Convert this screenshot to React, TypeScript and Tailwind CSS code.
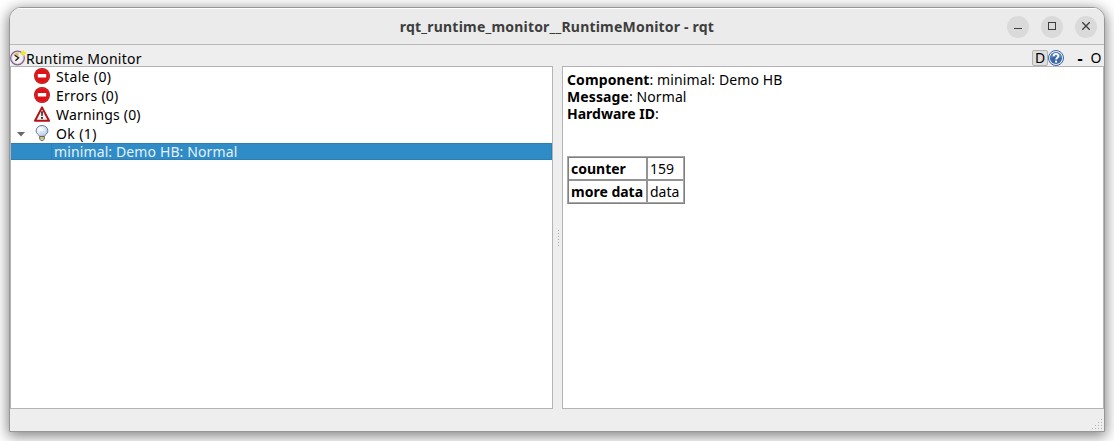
import React from "react";

function NoEntry() {
  return (
    <svg width="16" height="16" viewBox="0 0 16 16" className="block shrink-0">
      <circle cx="8" cy="8" r="8" fill="#b90d12" />
      <circle cx="8" cy="8" r="6.9" fill="#dc1216" stroke="#e84040" strokeWidth="0.5" />
      <rect x="3.8" y="6" width="8.4" height="3.6" rx="0.5" fill="#fff" />
    </svg>
  );
}

function Warning() {
  return (
    <svg width="16" height="16" viewBox="0 0 16 16" className="block shrink-0">
      <path d="M8 1.4 L15 14.8 H1 Z" fill="#f0f0f0" stroke="#b51216" strokeWidth="2" strokeLinejoin="round" />
      <path d="M7 5.2 H9 L8.7 10 H7.3 Z" fill="#333" />
      <rect x="7" y="11" width="2" height="1.8" fill="#333" />
    </svg>
  );
}

function Bulb() {
  return (
    <svg width="16" height="16" viewBox="0 0 16 16" className="block shrink-0">
      <defs>
        <radialGradient id="glass" cx="0.35" cy="0.35" r="0.75">
          <stop offset="0" stopColor="#ffffff" />
          <stop offset="0.55" stopColor="#dce8f7" />
          <stop offset="1" stopColor="#9fb9dd" />
        </radialGradient>
      </defs>
      <path d="M8 0.5 C4.6 0.5 2.1 2.9 2.1 5.9 C2.1 8.7 4.9 9.6 5.6 11.4 H10.4 C11.1 9.6 13.9 8.7 13.9 5.9 C13.9 2.9 11.4 0.5 8 0.5 Z" fill="url(#glass)" stroke="#6d7a98" strokeWidth="1" />
      <path d="M6.6 6 L7.5 11 M9.4 6 L8.5 11" stroke="#b4c2da" strokeWidth="0.6" />
      <path d="M5.7 11.5 H10.3 V14 L9 15.6 H7 L5.7 14 Z" fill="#e2dba8" stroke="#615b45" strokeWidth="0.9" />
      <path d="M5.7 13.2 H10.3" stroke="#8d866a" strokeWidth="0.6" />
    </svg>
  );
}

function ClockIcon() {
  return (
    <svg width="16" height="16" viewBox="0 0 16 16" className="block shrink-0">
      <circle cx="7.5" cy="8" r="6.8" fill="#f2f0f2" stroke="#80618f" strokeWidth="1.3" />
      <circle cx="7.5" cy="8" r="5.7" fill="none" stroke="#d5c9da" strokeWidth="0.6" />
      <path d="M8.5 8 L3.6 4.6 A5.2 5.2 0 0 1 8.5 2.8 Z" fill="#d9bd62" />
      <path d="M4.6 5.2 L8.6 7.8 L5.4 10.8" fill="none" stroke="#1c1c1c" strokeWidth="1.3" />
      <path d="M13.4 0.8 L14 2.3 L15.6 3 L14 3.8 L13.4 5.4 L12.7 3.8 L11.2 3 L12.7 2.3 Z" fill="#fff04a" stroke="#f6e71d" strokeWidth="1.1" />
    </svg>
  );
}

function HelpIcon() {
  return (
    <svg width="16" height="16" viewBox="0 0 16 16" className="block shrink-0">
      <circle cx="8" cy="8" r="7.5" fill="#eef3fa" stroke="#3c649e" strokeWidth="1" />
      <circle cx="8" cy="8" r="6.1" fill="#3c66a5" />
      <path d="M2.4 8 A5.6 5.6 0 0 1 13.6 8 Q8 5 2.4 8 Z" fill="#6388bd" />
      <path d="M5.7 6.2 C5.7 3.2 10.4 3.2 10.4 6 C10.4 7.7 8.1 7.7 8.1 9.6" fill="none" stroke="#fff" strokeWidth="1.8" />
      <rect x="7.1" y="10.6" width="2" height="2" fill="#fff" />
    </svg>
  );
}

function WindowButton({ label, children }: { label: string; children: React.ReactNode }) {
  return (
    <button aria-label={label} className="flex size-[22px] items-center justify-center rounded-full bg-[#dadada]">
      <svg width="22" height="22" viewBox="0 0 22 22" fill="none" stroke="#3d3d3d" strokeWidth="1">
        {children}
      </svg>
    </button>
  );
}

function StatusRow({ icon, label, open, spacing }: { icon: React.ReactNode; label: string; open?: boolean; spacing: string }) {
  return (
    <div className="flex h-[19px] items-start">
      <div className="flex w-[23px] shrink-0 pt-[8px] pl-[6px]">
        {open && (
          <svg width="8" height="5" viewBox="0 0 8 5">
            <path d="M0 0 H8 L4 4.6 Z" fill="#686868" />
          </svg>
        )}
      </div>
      <div className="pt-px">{icon}</div>
      <span className={"ml-[6px] leading-[19px] " + spacing}>{label}</span>
    </div>
  );
}

const gripDots = [[9, 0], [6, 3], [9, 3], [3, 6], [6, 6], [9, 6], [0, 9], [3, 9], [6, 9], [9, 9]];

export default function App() {
  return (
    <div className="h-[441px] w-[1114px] overflow-hidden bg-white pl-[9px] pt-[7px] font-['Noto_Sans',sans-serif] text-[14px] whitespace-nowrap text-black">
      <div className="flex h-[425px] w-[1096px] flex-col overflow-hidden rounded-t-[12px] border border-[#979797] bg-[#eeeeee] shadow-[0_3px_14px_1px_rgba(0,0,0,0.5)]">
        <header className="grid h-[37px] shrink-0 grid-cols-[1fr_auto_1fr] items-center border-t border-b border-t-white border-b-[#b9b9b9] bg-[#ebebeb]">
          <div />
          <h1 className="text-[14px] font-bold tracking-[0.2px] text-[#3d3d3d]">rqt_runtime_monitor__RuntimeMonitor - rqt</h1>
          <div className="flex justify-end gap-[12px] pr-[7px]">
            <WindowButton label="Minimize"><path d="M7 12.5 H15" /></WindowButton>
            <WindowButton label="Maximize"><rect x="7.5" y="6.5" width="7" height="7" /></WindowButton>
            <WindowButton label="Close"><path d="M7.3 6.3 L14.7 13.7 M14.7 6.3 L7.3 13.7" strokeWidth="1.3" /></WindowButton>
          </div>
        </header>
        <div className="flex h-[21px] shrink-0 items-end">
          <ClockIcon />
          <span className="leading-[15px] tracking-[0.25px]">Runtime Monitor</span>
          <div className="ml-auto flex h-[16px] items-start pr-[2px] leading-[16px]">
            <span className="flex h-[16px] w-[16px] items-center justify-center rounded-[2px] border border-[#b2b2b2] bg-[#dedede]">D</span>
            <HelpIcon />
            <span className="ml-[12px] w-[8px] text-center text-[16px] font-bold">-</span>
            <span className="ml-[6px] w-[12px] text-center">O</span>
          </div>
        </div>
        <main className="flex h-[343px] shrink-0">
          <section className="w-[543px] border border-[#b4b4b4] bg-white">
            <StatusRow icon={<NoEntry />} label="Stale (0)" spacing="tracking-[0.35px]" />
            <StatusRow icon={<NoEntry />} label="Errors (0)" spacing="tracking-[0.25px]" />
            <StatusRow icon={<Warning />} label="Warnings (0)" spacing="tracking-[0.17px]" />
            <StatusRow icon={<Bulb />} label="Ok (1)" open spacing="tracking-[0.4px]" />
            <div className="flex h-[17px] border border-l-0 border-[#2a7fb5] bg-[#308cc6] pl-[40px] text-[#e4f1fa]">
              <span className="grow border-l border-[#2a7fb5] pl-[2px] leading-[15px] tracking-[0.12px]">minimal: Demo HB: Normal</span>
            </div>
          </section>
          <div className="flex w-[9px] flex-col items-center justify-center gap-[2px] pl-px">
            {[0, 1, 2, 3, 4, 5].map((i) => <i key={i} className="size-px bg-[#a8a8a8]" />)}
          </div>
          <section className="w-[542px] border border-[#b4b4b4] bg-white pt-[4px] pl-[4px] leading-[17px]">
            <p className="tracking-[0.1px]"><b>Component</b>: minimal: Demo HB</p>
            <p className="tracking-[0.1px]"><b>Message</b>: Normal</p>
            <p><b>Hardware ID</b>:</p>
            <div className="mt-[34px] w-[118px] border border-t-[#a8a8a8] border-r-[#808080] border-b-[#808080] border-l-[#a8a8a8]">
              <div className="grid grid-cols-[77px_35px] gap-[2px] border border-t-[#808080] border-r-[#a8a8a8] border-b-[#a8a8a8] border-l-[#808080] bg-[#949494]">
                <div className="h-[21px] bg-white pl-[2px] leading-[22px] font-bold">counter</div>
                <div className="h-[21px] bg-white pl-[2px] leading-[22px]">159</div>
                <div className="h-[21px] bg-white pl-[2px] leading-[22px] font-bold">more data</div>
                <div className="h-[21px] bg-white pl-[2px] leading-[22px]">data</div>
              </div>
            </div>
          </section>
        </main>
        <footer className="flex grow items-end justify-end pr-[2px] pb-[2px]">
          <svg width="10" height="10" fill="#b5b5b5">
            {gripDots.map(([x, y]) => <rect key={x + "-" + y} x={x} y={y} width="1" height="1" />)}
          </svg>
        </footer>
      </div>
    </div>
  );
}
